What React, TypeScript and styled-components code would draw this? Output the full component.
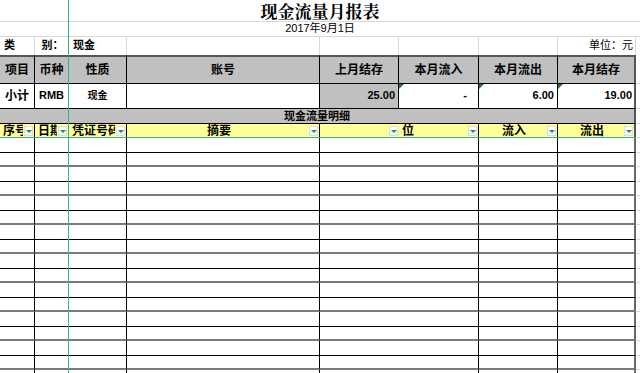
import styled, { createGlobalStyle, css } from 'styled-components';

const GlobalStyle = createGlobalStyle`
  html, body {
    margin: 0;
    padding: 0;
    background: #fff;
  }
  body {
    font-family: "Liberation Sans", "Noto Sans CJK SC", sans-serif;
    color: #000;
    overflow: hidden;
  }
`;

const GRID = '#d9d9d9';
const GRAY = '#c0c0c0';
const YELLOW = '#ffff99';
const FREEZE = '#2fb48c';

type Align = 'left' | 'center' | 'right';

const justify = (a?: Align) =>
  a === 'left' ? 'flex-start' : a === 'right' ? 'flex-end' : 'center';

const Sheet = styled.div`
  position: relative;
  width: 640px;
  height: 373px;
  overflow: hidden;
  display: grid;
  grid-template-columns: 35px 34px 58px 193px 79px 80px 79px 78px 4px;
  grid-template-rows: 22px 15px 18px 29px 25px 15px 14px;
  grid-auto-rows: 15px 14px;
`;

const Cell = styled.div<{ $align?: Align; $span?: number }>`
  box-sizing: border-box;
  display: flex;
  align-items: center;
  justify-content: ${(p) => justify(p.$align)};
  overflow: hidden;
  white-space: nowrap;
  line-height: 1.2;
  ${(p) => p.$span && css`grid-column: span ${p.$span};`}
`;

const Title = styled(Cell)`
  grid-column: 1 / -1;
  overflow: visible;
  border-bottom: 1px solid ${GRID};
  font-family: "Noto Serif CJK SC", "Noto Sans CJK SC", serif;
  font-size: 17px;
  font-weight: 700;
  line-height: 20px;
`;

const DateLine = styled(Cell)`
  grid-column: 1 / -1;
  border-bottom: 1px solid ${GRID};
  font-size: 11px;
`;

const InfoCell = styled(Cell)<{ $bold?: boolean }>`
  border-right: 1px solid ${GRID};
  font-size: 11px;
  font-weight: ${(p) => (p.$bold ? 700 : 400)};
  padding: 0 2px 0 4px;
`;

const Edge = styled.div<{ $line?: boolean }>`
  box-sizing: border-box;
  border-bottom: 1px solid ${(p) => (p.$line ? GRID : 'transparent')};
`;

const HeadCell = styled(Cell)<{ $last?: boolean }>`
  background: ${GRAY};
  border-top: 2px solid #555;
  border-bottom: 1px solid #000;
  border-right: ${(p) => (p.$last ? '2px solid #555' : '1px solid #000')};
  font-size: 12px;
  font-weight: 700;
`;

const ValueCell = styled(Cell)<{ $gray?: boolean; $marker?: boolean; $last?: boolean; $pad?: number }>`
  position: relative;
  background: ${(p) => (p.$gray ? GRAY : '#fff')};
  border-bottom: 1px solid #000;
  border-right: ${(p) => (p.$last ? '2px solid #555' : '1px solid #000')};
  font-size: 11px;
  font-weight: 700;
  padding-right: ${(p) => p.$pad ?? 0}px;

  ${(p) =>
    p.$marker &&
    css`
      &::before {
        content: '';
        position: absolute;
        left: 0;
        top: 0;
        border-top: 5px solid #1d7a2c;
        border-right: 5px solid transparent;
      }
    `}
`;

const SectionBar = styled(Cell)`
  grid-column: 1 / 9;
  background: ${GRAY};
  border-bottom: 1px solid #000;
  border-right: 2px solid #555;
  font-size: 11px;
  font-weight: 700;
  padding-top: 1px;
`;

const FilterCell = styled(Cell)<{ $open?: boolean; $last?: boolean }>`
  background: ${YELLOW};
  border-right: ${(p) =>
    p.$open ? 'none' : p.$last ? '2px solid #555' : '1px solid #000'};
  padding: 0 1px 0 3px;
  font-size: 12px;
  font-weight: 700;
`;

const Label = styled.span<{ $align?: Align }>`
  flex: 1;
  overflow: hidden;
  text-align: ${(p) => p.$align ?? 'left'};
`;

const Dropdown = styled.span`
  flex: none;
  position: relative;
  width: 9px;
  height: 10px;
  margin-left: 1px;
  background: linear-gradient(#ffffff, #eef0f2);
  border: 1px solid #d8dde2;
  box-sizing: border-box;

  &::after {
    content: '';
    position: absolute;
    left: 1px;
    top: 3px;
    border-left: 3px solid transparent;
    border-right: 3px solid transparent;
    border-top: 3px solid #2f8a6c;
  }
`;

const BodyCell = styled(Cell)<{ $even?: boolean; $last?: boolean }>`
  background: #fff;
  border-bottom: ${(p) => (p.$even ? '2px solid #7a7a7a' : '1px solid #000')};
  border-right: ${(p) => (p.$last ? '2px solid #6a6a6a' : '1px solid #000')};
`;

const FreezeColumn = styled.div`
  position: absolute;
  left: 68px;
  top: 0;
  bottom: 0;
  width: 1px;
  background: ${FREEZE};
`;

const FreezeRow = styled.div`
  position: absolute;
  left: 0;
  right: 4px;
  top: 137px;
  height: 1px;
  background: ${FREEZE};
`;

const heads = ['项目', '币种', '性质', '账号', '上月结存', '本月流入', '本月流出', '本月结存'];

const filters: { label: string; align?: Align; open?: boolean }[] = [
  { label: '序号' },
  { label: '日期' },
  { label: '凭证号码' },
  { label: '摘要', align: 'center' },
  { label: '', open: true },
  { label: '位' },
  { label: '流入', align: 'center' },
  { label: '流出', align: 'center' },
];

const bodyRows = Array.from({ length: 17 }, (_, i) => i);

export default function App() {
  return (
    <>
      <GlobalStyle />
      <Sheet>
        <Title>现金流量月报表</Title>
        <DateLine>2017年9月1日</DateLine>

        <InfoCell $align="left" $bold>类</InfoCell>
        <InfoCell $bold>别：</InfoCell>
        <InfoCell $align="left" $bold>现金</InfoCell>
        <InfoCell />
        <InfoCell />
        <InfoCell />
        <InfoCell />
        <InfoCell $align="right">单位：元</InfoCell>
        <Edge />

        {heads.map((h, i) => (
          <HeadCell key={h} $last={i === heads.length - 1}>{h}</HeadCell>
        ))}
        <Edge $line />

        <ValueCell style={{ fontSize: 12 }}>小计</ValueCell>
        <ValueCell>RMB</ValueCell>
        <ValueCell style={{ fontSize: 10 }}>现金</ValueCell>
        <ValueCell />
        <ValueCell $gray $align="right" $pad={3}>25.00</ValueCell>
        <ValueCell $marker $align="right" $pad={11}>-</ValueCell>
        <ValueCell $marker $align="right" $pad={3}>6.00</ValueCell>
        <ValueCell $marker $last $align="right" $pad={2}>19.00</ValueCell>
        <Edge $line />

        <SectionBar>现金流量明细</SectionBar>
        <Edge $line />

        {filters.map((f, i) => (
          <FilterCell key={i} $open={f.open} $last={i === filters.length - 1}>
            <Label $align={f.align}>{f.label}</Label>
            <Dropdown />
          </FilterCell>
        ))}
        <Edge $line />

        {bodyRows.map((r) => {
          const even = r % 2 === 1;
          return [
            <BodyCell key={`${r}a`} $even={even} />,
            <BodyCell key={`${r}b`} $even={even} />,
            <BodyCell key={`${r}c`} $even={even} />,
            <BodyCell key={`${r}d`} $even={even} />,
            <BodyCell key={`${r}e`} $even={even} $span={2} />,
            <BodyCell key={`${r}f`} $even={even} />,
            <BodyCell key={`${r}g`} $even={even} $last />,
            <Edge key={`${r}h`} $line />,
          ];
        })}

        <FreezeColumn />
        <FreezeRow />
      </Sheet>
    </>
  );
}
